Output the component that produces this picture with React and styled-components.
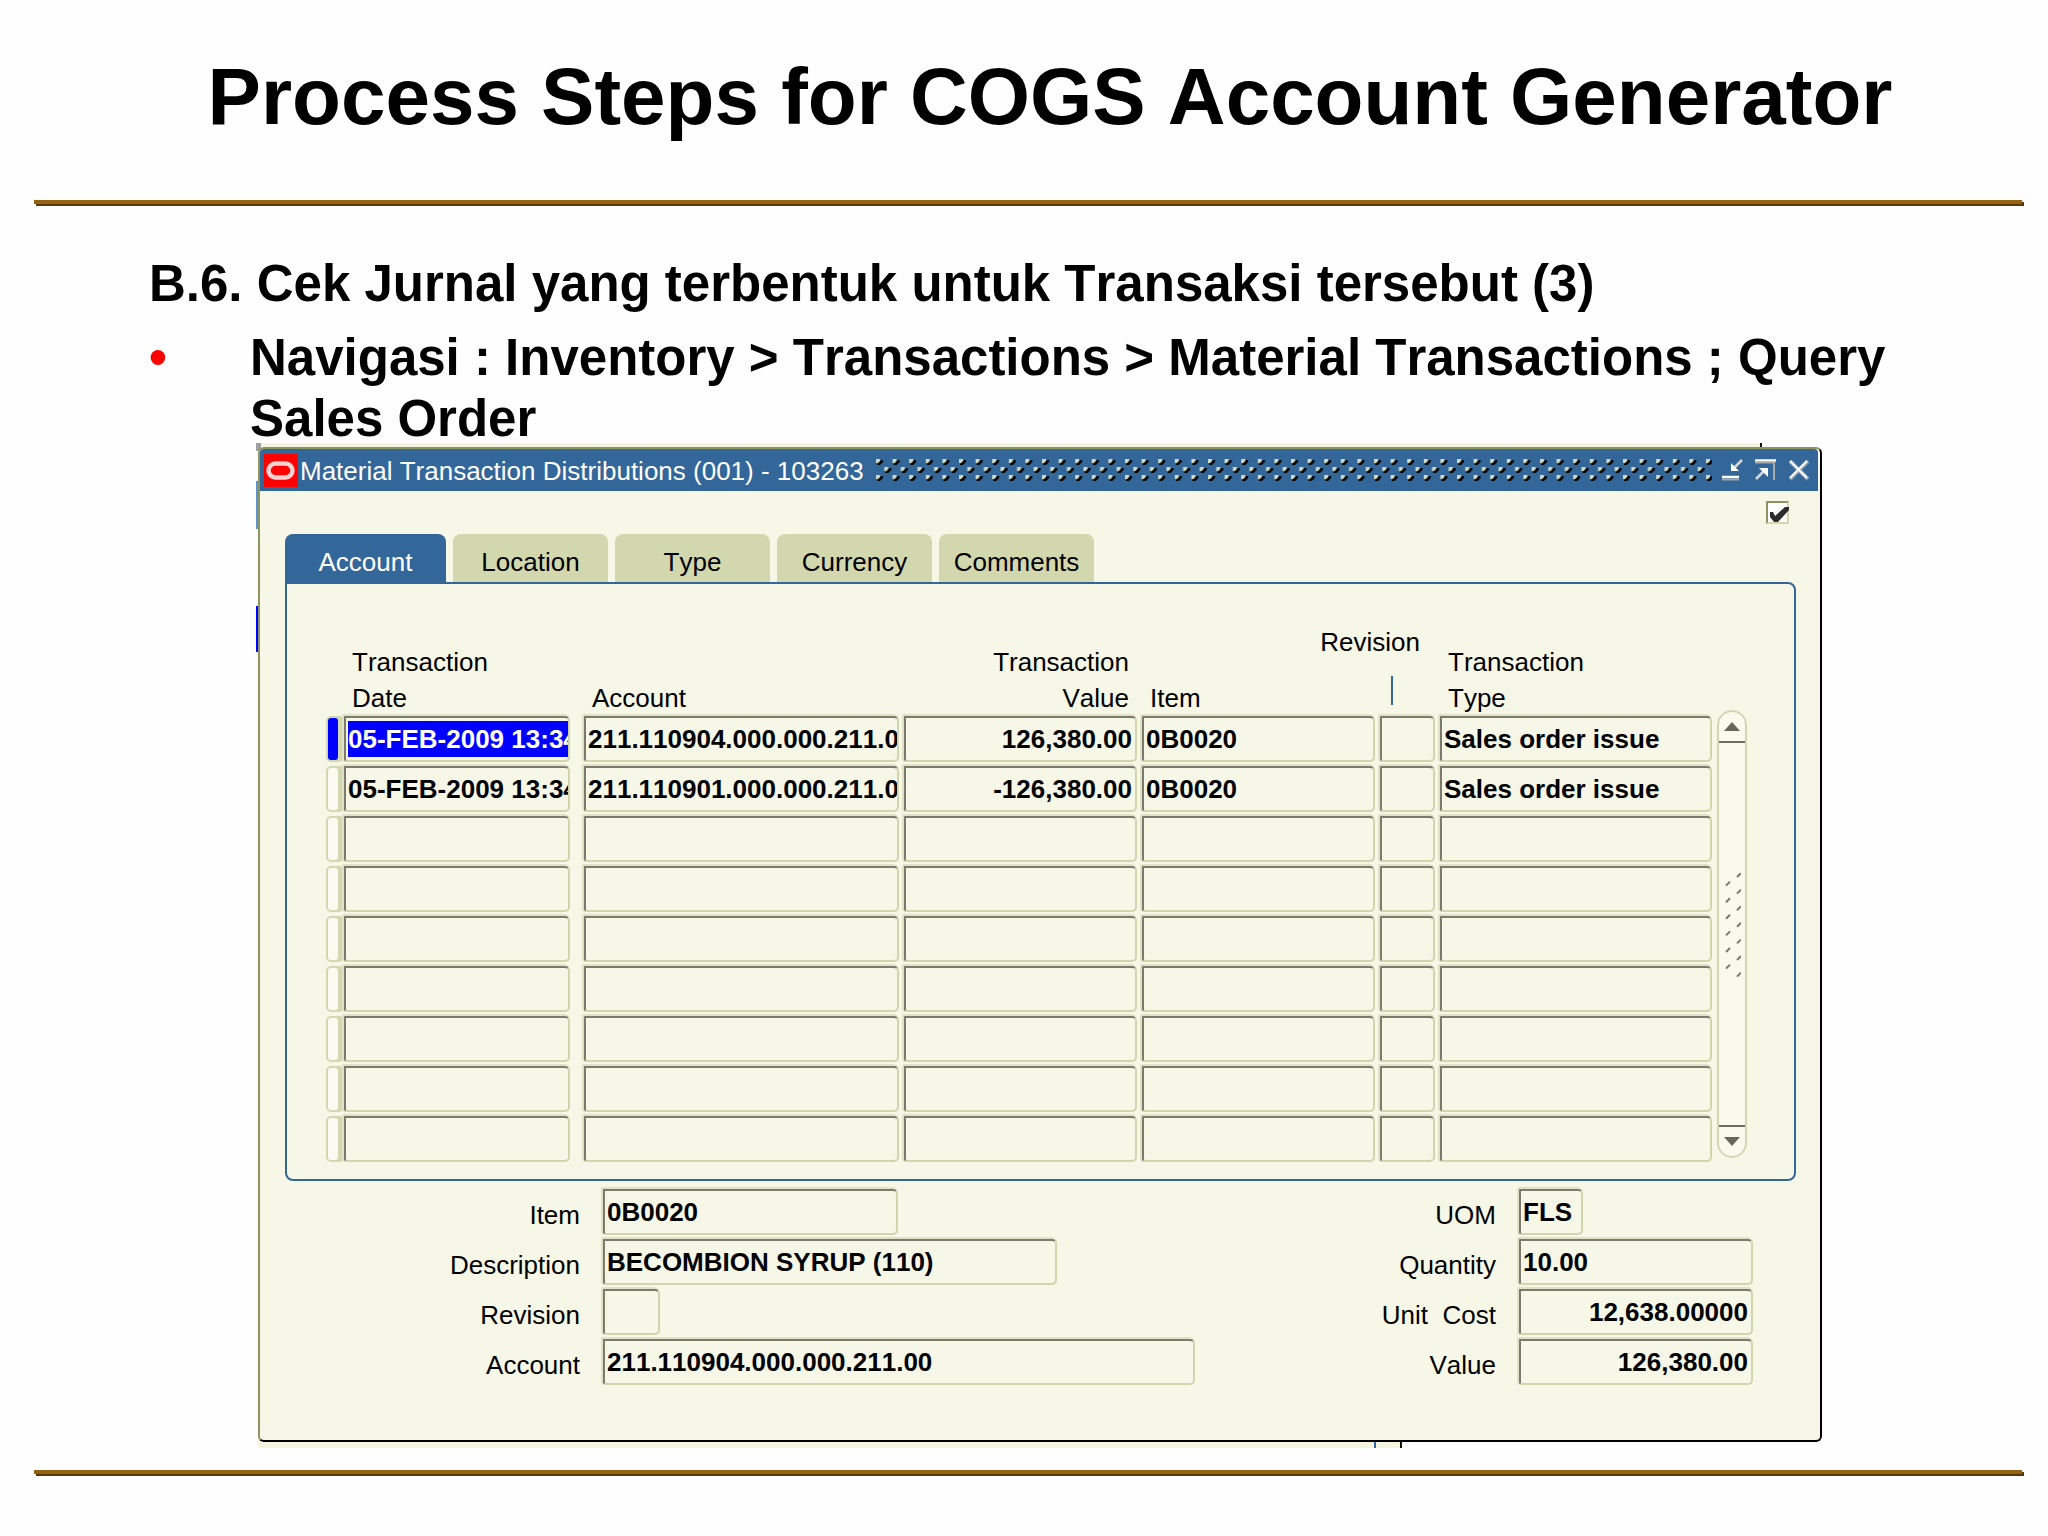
import React, { useState } from 'react'
import styled, { createGlobalStyle } from 'styled-components'

const GlobalStyle = createGlobalStyle`
    *{
        box-sizing: border-box;
    }

    body{
        margin: 0;
        background: #fefefe;
        color: #000;
        font-family: "Liberation Sans", Arial, sans-serif;
        font-kerning: none;
    }

    input, button{
        font-family: inherit;
        font-kerning: none;
        margin: 0;
    }
`

const Slide = styled.main`
    min-height: 100vh;
    padding: 49px 26px 0 34px;
`

const Title = styled.h1`
    margin: 0 0 55px;
    padding-left: 44px;
    font-size: 80px;
    line-height: 96px;
    text-align: center;
`

const Rule = styled.hr`
    height: 4px;
    margin: 0;
    border: none;
    background: #946312;
    box-shadow: 2px 2px 0 #5a3806;
`

const Content = styled.section`
    padding: 49px 80px 0 115px;
    font-size: 51px;
    font-weight: bold;
    line-height: 61px;

    h2{
        margin: 0 0 13px;
        font-size: inherit;
    }

    ul{
        margin: 0;
        padding: 0;
        list-style: none;
    }

    li{
        display: flex;
    }

    li::before{
        content: "•";
        flex: 0 0 101px;
        color: #f00;
    }
`

const Screenshot = styled.div`
    position: relative;
    margin: -2px 200px 28px 224px;
    font-size: 26px;
    line-height: 36px;
`

/* edges of the windows that sit behind the front one */
const BehindBottom = styled.div`
    position: absolute;
    bottom: -6px;
    left: 0;
    right: 420px;
    height: 12px;
    background: linear-gradient(#2f62a8, #2f62a8) right 24px top 0 / 2px 100% no-repeat #f5f6e0;
    border-right: 2px solid #111;
`

const BehindTop = styled.div`
    position: absolute;
    top: -4px;
    left: -2px;
    right: 60px;
    height: 8px;
    background: #f5f6e0;
    border-right: 2px solid #111;
    border-left: 5px solid #a0a0a0;
`

const Sliver = styled.span`
    position: absolute;
    left: -2px;
    width: 2px;
    top: ${props => props.$top}px;
    height: ${props => props.$height}px;
    background: ${props => props.$color};
`

const Window = styled.section`
    position: relative;
    background: #f7f7e8;
    border-style: solid;
    border-width: 2px;
    border-color: #8c9560 #000 #000 #8c9560;
    border-radius: 6px;
`

const TitleBar = styled.header`
    display: flex;
    align-items: center;
    height: 42px;
    margin-right: 2px;
    padding: 0 8px 0 4px;
    background: #336699;
    color: #fff;
    border-radius: 4px 4px 0 0;

    h3{
        margin: 0 12px 0 2px;
        padding-top: 2px;
        font-size: inherit;
        font-weight: normal;
        white-space: nowrap;
    }
`

const Grip = styled.svg`
    flex: 1;
    min-width: 0;
    height: 26px;
    margin-right: 10px;
`

const WindowButtons = styled.div`
    display: flex;
    gap: 11px;
`

const IconButton = styled.button`
    display: flex;
    padding: 0;
    border: none;
    background: none;
`

const Body = styled.div`
    padding: 10px 24px 55px 25px;
`

const FolderCheck = styled.label`
    position: relative;
    display: block;
    width: 23px;
    height: 23px;
    margin: 0 7px 10px auto;

    input{
        appearance: none;
        display: block;
        width: 23px;
        height: 23px;
        background: #fff;
        border: 2px solid;
        border-color: #8c9560 #d3d8b0 #d3d8b0 #8c9560;
    }

    svg{
        position: absolute;
        top: 0;
        left: 0;
        pointer-events: none;
        display: none;
    }

    input:checked + svg{
        display: block;
    }
`

const Tabs = styled.div`
    display: flex;
    gap: 7px;
`

const Tab = styled.button`
    width: ${props => props.$active ? 161 : 155}px;
    height: 48px;
    padding: 7px 0 0;
    border: none;
    border-radius: 8px 8px 0 0;
    background: ${props => props.$active ? '#336699' : '#d2d7ae'};
    color: ${props => props.$active ? '#fff' : '#000'};
    font-size: 26px;
    line-height: 36px;
`

const Panel = styled.div`
    display: flex;
    gap: 5px;
    padding: 40px 47px 13px 39px;
    border: 2px solid #336699;
    border-radius: 0 8px 8px 8px;
`

const Grid = styled.table`
    flex: 1;
    width: 100%;
    min-width: 0;
    table-layout: fixed;
    border-collapse: collapse;

    th{
        padding: 0 0 0 8px;
        vertical-align: bottom;
        font-weight: normal;
        text-align: left;
        white-space: nowrap;
    }

    th.value{
        padding: 0 13px 0 0;
        text-align: right;
    }

    th.revision{
        padding: 0 20px 0 0;
    }

    td{
        height: 50px;
        padding: 0 ${props => props.$gap}px 4px 0;
    }

    td.date{
        padding-right: 14px;
    }

    td.last{
        padding-right: 0;
    }
`

const RevisionHead = styled.div`
    display: flex;
    flex-direction: column;
    align-items: flex-end;

    &::after{
        content: "";
        width: 2px;
        height: 29px;
        margin: 16px 27px 11px 0;
        background: #336699;
    }
`

const RowMark = styled.div`
    width: 14px;
    height: 46px;
    border: 2px solid #d3d8b0;
    border-radius: 5px;
    box-shadow: 4px 0 0 #d3d8b0;
    background: ${props => props.$current ? '#00f' : '#fafaf0'};
`

const Field = styled.input`
    display: block;
    width: ${props => props.$width || '100%'};
    height: 46px;
    padding: 3px 0 3px 2px;
    border: 2px solid;
    border-color: #7b7a6c #d0d5ab #d0d5ab #7b7a6c;
    border-radius: 1px 5px 5px 3px;
    box-shadow: -1px -1px 0 1px #dfe2c4;
    background: ${props => props.$selected ? '#00f content-box' : 'transparent'};
    color: ${props => props.$selected ? '#fff' : '#000'};
    font-size: 26px;
    font-weight: bold;
    text-align: ${props => props.$right ? 'right' : 'left'};
    padding-right: ${props => props.$right ? 3 : 0}px;
    outline: none;
`

const ScrollBar = styled.div`
    display: flex;
    flex-direction: column;
    align-items: center;
    justify-content: space-between;
    width: 30px;
    margin: 86px 0 8px;
    border: 2px solid #d3d8b0;
    border-radius: 15px;
    background: #f9f9ee;
`

const ScrollButton = styled.button`
    display: flex;
    align-items: center;
    justify-content: center;
    width: 26px;
    height: 31px;
    padding: 0;
    border: 0 solid #6b6b5e;
    border-width: ${props => props.$up ? '0 0 2px' : '2px 0 0'};
    background: none;
`

const Details = styled.form`
    display: flex;
    justify-content: space-between;
    padding: 8px 43px 0 0;
`

const DetailColumn = styled.div`
    display: grid;
    grid-template-columns: ${props => props.$label}px auto;
    column-gap: 23px;
    row-gap: 4px;

    label{
        padding-top: 8px;
        text-align: right;
        white-space: pre;
    }
`

const tabs = ['Account', 'Location', 'Type', 'Currency', 'Comments']

const emptyRow = { date: '', account: '', value: '', item: '', revision: '', type: '' }

const rows = [
    { date: '05-FEB-2009 13:34', account: '211.110904.000.000.211.00', value: '126,380.00', item: '0B0020', revision: '', type: 'Sales order issue' },
    { date: '05-FEB-2009 13:34', account: '211.110901.000.000.211.00', value: '-126,380.00', item: '0B0020', revision: '', type: 'Sales order issue' },
    ...Array(7).fill(emptyRow)
]

const leftFields = [
    { id: 'item', label: 'Item', value: '0B0020', width: '295px' },
    { id: 'description', label: 'Description', value: 'BECOMBION SYRUP (110)', width: '454px' },
    { id: 'revision', label: 'Revision', value: '', width: '57px' },
    { id: 'account', label: 'Account', value: '211.110904.000.000.211.00', width: '592px' }
]

const rightFields = [
    { id: 'uom', label: 'UOM', value: 'FLS', width: '64px' },
    { id: 'quantity', label: 'Quantity', value: '10.00', width: '234px' },
    { id: 'cost', label: 'Unit  Cost', value: '12,638.00000', width: '234px', right: true },
    { id: 'value', label: 'Value', value: '126,380.00', width: '234px', right: true }
]

const OracleLogo = () => (
    <svg width="34" height="33" viewBox="0 0 34 33" aria-hidden="true">
        <rect width="34" height="33" fill="#f00" />
        <rect x="4.5" y="9.5" width="24" height="14" rx="7" fill="none" stroke="#ffd0d0" strokeWidth="4.5" />
    </svg>
)

const TitleGrip = () => (
    <Grip aria-hidden="true">
        <defs>
            <pattern id="studs" width="16.6" height="26" patternUnits="userSpaceOnUse">
                {[[0, 2], [8.3, 10], [0, 18]].map(([x, y]) => (
                    <g key={y}>
                        <path d={`M${x + 1} ${y + 6}h3l3 -3v-2h-2l-4 4z`} fill="#000" />
                        <path d={`M${x} ${y}h4v2l-2 2h-2z`} fill="#d0d9c0" />
                    </g>
                ))}
            </pattern>
        </defs>
        <rect width="100%" height="26" fill="url(#studs)" />
    </Grip>
)

const DetailFields = ({ fields, label }) => (
    <DetailColumn $label={label}>
        {fields.map(field => (
            <React.Fragment key={field.id}>
                <label htmlFor={field.id}>{field.label}</label>
                <Field
                    id={field.id}
                    type="text"
                    defaultValue={field.value}
                    $width={field.width}
                    $right={field.right}
                />
            </React.Fragment>
        ))}
    </DetailColumn>
)

const ScrollGrip = () => (
    <svg width="18" height="122" viewBox="0 0 18 122" stroke="#77776a" strokeWidth="2" aria-hidden="true">
        {[0, 1, 2, 3, 4, 5, 6].map(i => (
            <path key={i} d={`M14 ${4 + i * 16.6}l4 -4`} />
        ))}
        {[0, 1, 2, 3, 4, 5].map(i => (
            <path key={i} d={`M3 ${12.6 + i * 16.6}l4 -4`} />
        ))}
    </svg>
)

const App = () => {

    const [activeTab, setActiveTab] = useState('Account')

    return(
        <Slide>
            <GlobalStyle />
            <Title>Process Steps for COGS Account Generator</Title>
            <Rule />
            <Content>
                <h2>B.6. Cek Jurnal yang terbentuk untuk Transaksi tersebut (3)</h2>
                <ul>
                    <li>Navigasi : Inventory &gt; Transactions &gt; Material Transactions ; Query Sales Order</li>
                </ul>
            </Content>

            <Screenshot>
                <BehindBottom />
                <BehindTop />
                <Sliver $top={34} $height={48} $color="#5f93cc" />
                <Sliver $top={159} $height={46} $color="#00f" />
                <Window>
                    <TitleBar>
                        <OracleLogo />
                        <h3>Material Transaction Distributions (001) - 103263</h3>
                        <TitleGrip />
                        <WindowButtons>
                            <IconButton type="button" aria-label="Minimize">
                                <svg width="22" height="22" viewBox="0 0 22 22" fill="none" stroke="#fff" strokeWidth="2.5">
                                    <path d="M20 1L11 10" stroke="#d8d8d8" />
                                    <path d="M9 4V12H17Z" fill="#fff" stroke="none" />
                                    <path d="M0 18H17" />
                                    <path d="M0 20.5H17" stroke="#a9a9a9" strokeWidth="2" />
                                </svg>
                            </IconButton>
                            <IconButton type="button" aria-label="Maximize">
                                <svg width="22" height="22" viewBox="0 0 22 22" fill="none" stroke="#fff" strokeWidth="2.5">
                                    <path d="M0 1.5H21" />
                                    <path d="M0 3.5H19V21" stroke="#a9a9a9" strokeWidth="2" />
                                    <path d="M1 20L9 12" stroke="#d8d8d8" />
                                    <path d="M4 9H13V18Z" fill="#fff" stroke="none" />
                                </svg>
                            </IconButton>
                            <IconButton type="button" aria-label="Close">
                                <svg width="22" height="22" viewBox="0 0 22 22" fill="none">
                                    <path d="M2 2L20 20M20 2L2 20" stroke="#8fa3bb" strokeWidth="4" />
                                    <path d="M2 2L19 19M19 2L2 19" stroke="#fff" strokeWidth="2" />
                                </svg>
                            </IconButton>
                        </WindowButtons>
                    </TitleBar>

                    <Body>
                        <FolderCheck>
                            <input type="checkbox" defaultChecked aria-label="Folder" />
                            <svg width="23" height="23" viewBox="0 0 23 23">
                                <path d="M4 11h3l2 4l10 -9h4v3l-11 12h-4l-4 -5z" fill="#2b2b2b" />
                            </svg>
                        </FolderCheck>

                        <Tabs role="tablist">
                            {tabs.map(tab => (
                                <Tab
                                    key={tab}
                                    type="button"
                                    role="tab"
                                    aria-selected={tab === activeTab}
                                    $active={tab === activeTab}
                                    onClick={() => setActiveTab(tab)}
                                >
                                    {tab}
                                </Tab>
                            ))}
                        </Tabs>

                        <Panel>
                            <Grid $gap={5}>
                                <colgroup>
                                    <col style={{ width: 18 }} />
                                    <col style={{ width: 240 }} />
                                    <col style={{ width: 320 }} />
                                    <col style={{ width: 238 }} />
                                    <col style={{ width: 238 }} />
                                    <col style={{ width: 60 }} />
                                    <col style={{ width: 272 }} />
                                </colgroup>
                                <thead>
                                    <tr>
                                        <td className="last"></td>
                                        <th>Transaction<br />Date</th>
                                        <th>Account</th>
                                        <th className="value">Transaction<br />Value</th>
                                        <th>Item</th>
                                        <th className="revision"><RevisionHead>Revision</RevisionHead></th>
                                        <th>Transaction<br />Type</th>
                                    </tr>
                                </thead>
                                <tbody>
                                    {rows.map((row, i) => (
                                        <tr key={i}>
                                            <td className="last"><RowMark $current={i === 0} /></td>
                                            <td className="date"><Field aria-label="Transaction Date" defaultValue={row.date} $selected={i === 0} /></td>
                                            <td><Field aria-label="Account" defaultValue={row.account} /></td>
                                            <td><Field aria-label="Transaction Value" defaultValue={row.value} $right /></td>
                                            <td><Field aria-label="Item" defaultValue={row.item} /></td>
                                            <td><Field aria-label="Revision" defaultValue={row.revision} /></td>
                                            <td className="last"><Field aria-label="Transaction Type" defaultValue={row.type} /></td>
                                        </tr>
                                    ))}
                                </tbody>
                            </Grid>
                            <ScrollBar>
                                <ScrollButton type="button" $up aria-label="Scroll up">
                                    <svg width="16" height="9" viewBox="0 0 16 9"><path d="M8 0L16 9H0Z" fill="#66665a" /></svg>
                                </ScrollButton>
                                <ScrollGrip />
                                <ScrollButton type="button" aria-label="Scroll down">
                                    <svg width="16" height="9" viewBox="0 0 16 9"><path d="M8 9L16 0H0Z" fill="#66665a" /></svg>
                                </ScrollButton>
                            </ScrollBar>
                        </Panel>

                        <Details>
                            <DetailFields fields={leftFields} label={295} />
                            <DetailFields fields={rightFields} label={140} />
                        </Details>
                    </Body>
                </Window>
            </Screenshot>
            <Rule />
        </Slide>
    )
}

export default App
